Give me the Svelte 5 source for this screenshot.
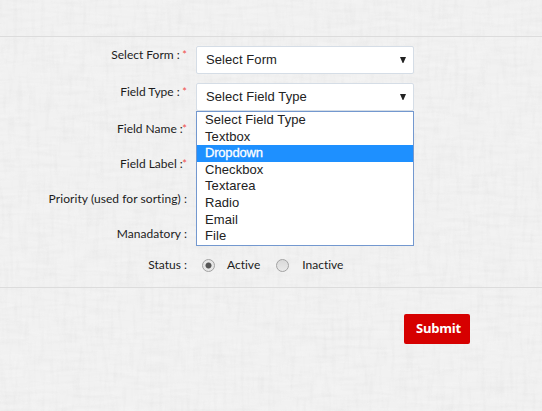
<script>
  const rows = [
    { label: 'Select Form : ', required: true, height: 37, value: 'Select Form' },
    { label: 'Field Type : ', required: true, height: 37, value: 'Select Field Type', open: true },
    { label: 'Field Name :', required: true, height: 35 },
    { label: 'Field Label :', required: true, height: 35 },
    { label: 'Priority (used for sorting) :', height: 35 },
    { label: 'Manadatory :', height: 31 },
    { label: 'Status :', height: 30, radios: true }
  ];
  const options = ['Select Field Type', 'Textbox', 'Dropdown', 'Checkbox', 'Textarea', 'Radio', 'Email', 'File'];
  let selected = $state('Dropdown');
  let status = $state('Active');
</script>

<div class="page">
  <svg class="linen" width="542" height="411" aria-hidden="true">
    <filter id="warp" x="0" y="0" width="100%" height="100%" color-interpolation-filters="sRGB">
      <feTurbulence type="fractalNoise" baseFrequency="0.22 0.035" numOctaves="2" seed="4" />
      <feColorMatrix values="0 0 0 0 0.5  0 0 0 0 0.5  0 0 0 0 0.5  0.7 0 0 0 -0.32" />
    </filter>
    <filter id="weft" x="0" y="0" width="100%" height="100%" color-interpolation-filters="sRGB">
      <feTurbulence type="fractalNoise" baseFrequency="0.035 0.22" numOctaves="2" seed="9" />
      <feColorMatrix values="0 0 0 0 1  0 0 0 0 1  0 0 0 0 1  3 0 0 0 -1.3" />
    </filter>
    <filter id="weft-dark" x="0" y="0" width="100%" height="100%" color-interpolation-filters="sRGB">
      <feTurbulence type="fractalNoise" baseFrequency="0.035 0.22" numOctaves="2" seed="15" />
      <feColorMatrix values="0 0 0 0 0.5  0 0 0 0 0.5  0 0 0 0 0.5  0.7 0 0 0 -0.32" />
    </filter>
    <rect width="542" height="411" filter="url(#weft)" opacity="0.13" />
    <rect width="542" height="411" filter="url(#warp)" opacity="0.13" />
    <rect width="542" height="411" filter="url(#weft-dark)" opacity="0.12" />
  </svg>

  <form class="form">
    {#each rows as row}
      <div class="row" style:height="{row.height}px">
        <div class="label">{row.label}{#if row.required}<span class="req">*</span>{/if}</div>
        {#if row.value}
          <div class="select">
            <span>{row.value}</span>
            <svg width="6" height="6" viewBox="0 0 6 6"><path d="M0 0h6L3.4 6h-.8z" fill="#222" /></svg>
            {#if row.open}
              <ul class="menu">
                {#each options as option}
                  <li class:active={option === selected}>{option}</li>
                {/each}
              </ul>
            {/if}
          </div>
        {:else if row.radios}
          <div class="radios">
            {#each ['Active', 'Inactive'] as name}
              <span class="radio" class:checked={status === name}></span><span class="name">{name}</span>
            {/each}
          </div>
        {/if}
      </div>
    {/each}
  </form>
  <div class="actions"><button type="button">Submit</button></div>
</div>

<style>
  :global(body) { margin: 0; }
  .page {
    position: relative;
    width: 542px;
    height: 411px;
    overflow: hidden;
    box-sizing: border-box;
    padding-top: 36px;
    background: #f1f1f1;
    font: 12px/16px Lato, sans-serif;
    font-variant-ligatures: none;
    color: #1c1c1c;
  }
  .linen { position: absolute; inset: 0; }
  .form {
    position: relative;
    height: 241px;
    padding-top: 9px;
    border-top: 1px solid #dcdcdc;
    border-bottom: 1px solid #dcdcdc;
  }
  .row { display: flex; align-items: flex-start; }
  .label {
    width: 187px;
    margin-right: 9px;
    padding-top: 1px;
    text-align: right;
    white-space: pre;
  }
  .row:nth-child(5) .label { letter-spacing: 0.07px; }
  .row:nth-child(6) .label { letter-spacing: 0.06px; }
  .req { color: #f0504c; font-size: 11px; margin-left: -0.5px; }
  .select {
    position: relative;
    box-sizing: border-box;
    width: 218px;
    height: 28px;
    padding: 0 7px 0 9px;
    display: flex;
    align-items: center;
    justify-content: space-between;
    border: 1px solid #d5dde6;
    border-radius: 2px;
    background: #fff;
    font: 13px/16px "Liberation Sans", Arial, sans-serif;
    letter-spacing: 0.08px;
    color: #222;
  }
  .menu {
    position: absolute;
    z-index: 1;
    top: 27px;
    left: -1px;
    box-sizing: border-box;
    width: 218px;
    height: 135px;
    margin: 0;
    padding: 0;
    list-style: none;
    border: 1px solid #7398cf;
    background: #fff;
  }
  li { height: 16.6px; line-height: 16.6px; padding-left: 8px; }
  li.active { background: #1e90ff; color: #fff; letter-spacing: -0.2px; -webkit-text-stroke: 0.3px #fff; }
  .radios { display: flex; align-items: flex-start; padding: 1px 0 0 6px; }
  .radio {
    box-sizing: border-box;
    width: 13px;
    height: 13px;
    margin-top: 2px;
    border: 1px solid #a2a2a2;
    border-radius: 50%;
    background: linear-gradient(#d9d9d9, #e9e9e9);
  }
  .checked { background: radial-gradient(circle, #555 0 2.6px, #e6e6e6 3.4px); }
  .name { margin: 0 15.5px 0 12px; }
  .name:last-child { margin-left: 13.5px; }
  .actions { position: relative; display: flex; justify-content: flex-end; padding: 26px 72px 0 0; }
  button {
    width: 66px;
    height: 30px;
    padding: 0 0 3px 3px;
    border: 0;
    border-radius: 2px;
    background: #d60000;
    color: #fff;
    font: bold 13px/16px "Open Sans", sans-serif;
    letter-spacing: -0.2px;
  }
</style>
